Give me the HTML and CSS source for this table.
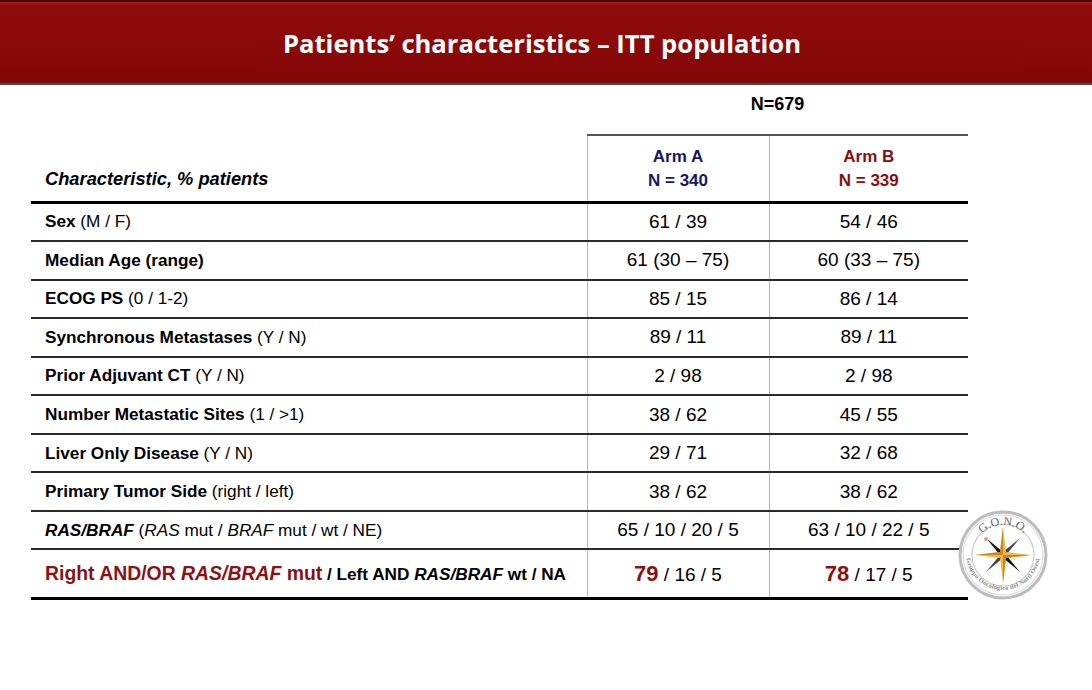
FILE: index.html
```html
<!DOCTYPE html>
<html>
<head>
<meta charset="utf-8">
<link rel="stylesheet" href="styles.css">
</head>
<body>
<header class="banner"><h1>Patients’ characteristics – ITT population</h1></header>
<main class="content">
<table class="chars">
  <colgroup><col class="c1"><col class="c2"><col class="c3"></colgroup>
  <tr class="total">
    <td></td><td colspan="2" class="ntot">N=679</td>
  </tr>
  <tr class="head">
    <th class="label">Characteristic, % patients</th>
    <th class="arm arm-a">Arm A<br>N = 340</th>
    <th class="arm arm-b">Arm B<br>N = 339</th>
  </tr>
  <tr><td class="label"><b>Sex</b> (M / F)</td><td>61 / 39</td><td>54 / 46</td></tr>
  <tr><td class="label"><b>Median Age (range)</b></td><td>61 (30 – 75)</td><td>60 (33 – 75)</td></tr>
  <tr><td class="label"><b>ECOG PS</b> (0 / 1-2)</td><td>85 / 15</td><td>86 / 14</td></tr>
  <tr><td class="label"><b>Synchronous Metastases</b> (Y / N)</td><td>89 / 11</td><td>89 / 11</td></tr>
  <tr><td class="label"><b>Prior Adjuvant CT</b> (Y / N)</td><td>2 / 98</td><td>2 / 98</td></tr>
  <tr><td class="label"><b>Number Metastatic Sites</b> (1 / &gt;1)</td><td>38 / 62</td><td>45 / 55</td></tr>
  <tr><td class="label"><b>Liver Only Disease</b> (Y / N)</td><td>29 / 71</td><td>32 / 68</td></tr>
  <tr><td class="label"><b>Primary Tumor Side</b> (right / left)</td><td>38 / 62</td><td>38 / 62</td></tr>
  <tr><td class="label"><b><i>RAS/BRAF</i></b> (<i>RAS</i> mut / <i>BRAF</i> mut / wt / NE)</td><td>65 / 10 / 20 / 5</td><td>63 / 10 / 22 / 5</td></tr>
  <tr class="last">
    <td class="label"><span class="hl">Right AND/OR <i>RAS/BRAF</i> mut</span> <b class="rest">/ Left AND <i>RAS/BRAF</i> wt / NA</b></td>
    <td><span class="big">79</span> / 16 / 5</td>
    <td><span class="big">78</span> / 17 / 5</td>
  </tr>
</table>
<div class="logo">
  <svg width="92" height="92" viewBox="0 0 92 92">
    <defs>
      <path id="arcTop" d="M16 46 A30 30 0 0 1 76 46"/>
      <path id="arcBot" d="M9 44 A37 37 0 0 0 83 44"/>
    </defs>
    <circle cx="46" cy="46" r="43" fill="#fff" stroke="#bdbdbd" stroke-width="3"/>
    <circle cx="46" cy="46" r="40" fill="none" stroke="#e2e2e2" stroke-width="1.5"/>
    <circle cx="46" cy="46" r="31" fill="none" stroke="#cacaca" stroke-width="1.2"/>
    <text font-family="Liberation Serif, serif" font-size="12" fill="#666"><textPath href="#arcTop" startOffset="50%" text-anchor="middle">G.O.N.O.</textPath></text>
    <text font-family="Liberation Serif, serif" font-size="6.5" font-weight="700" fill="#8a8a8a" letter-spacing="0.2"><textPath href="#arcBot" startOffset="50%" text-anchor="middle">Gruppo Oncologico del Nord Ovest</textPath></text>
    <polygon points="29,29 46,43 43,46" fill="#111"/>
    <polygon points="63,29 46,43 49,46" fill="#444"/>
    <polygon points="29,63 46,49 43,46" fill="#444"/>
    <polygon points="63,63 46,49 49,46" fill="#111"/>
    <polygon points="46,18 49,43 46,46 43,43" fill="#f3b44a"/>
    <polygon points="46,74 49,49 46,46 43,49" fill="#f3b44a"/>
    <polygon points="18,46 43,43 46,46 43,49" fill="#f3b44a"/>
    <polygon points="74,46 49,43 46,46 49,49" fill="#f3b44a"/>
    <polygon points="46,18 46,46 43,43" fill="#c98722"/>
    <polygon points="46,74 46,46 49,49" fill="#c98722"/>
    <polygon points="74,46 46,46 49,49" fill="#c98722"/>
    <polygon points="18,46 46,46 43,43" fill="#c98722"/>
    <circle cx="29" cy="30" r="2" fill="#e8a050"/>
  </svg>
</div>
</main>
</body>
</html>
```
FILE: styles.css
```css
html, body {
  margin: 0;
  padding: 0;
  background: #fff;
}
body {
  width: 1092px;
  height: 690px;
  overflow: hidden;
  font-family: "Liberation Sans", Arial, sans-serif;
  color: #000;
}
.banner {
  height: 81px;
  background: linear-gradient(#a81a1a 0, #8e0b0b 4px, #8a0909 60%, #800707 100%);
  border-top: 2px solid #4a0404;
  border-bottom: 2px solid #4a4a4a;
  display: flex;
  align-items: center;
  justify-content: center;
}
.banner h1 {
  margin: 0;
  color: #fff;
  font-family: "Open Sans", "Noto Sans", sans-serif;
  font-weight: 700;
  font-size: 25.6px;
  letter-spacing: 0;
  padding-top: 2px;
  padding-right: 8px;
}
.content {
  position: relative;
  padding-left: 31px;
}
.chars {
  border-collapse: collapse;
  width: 937px;
  table-layout: fixed;
  font-size: 19px;
}
.c1 { width: 556px; }
.c2 { width: 182px; }
.c3 { width: 199px; }
.chars td, .chars th {
  padding: 0;
  text-align: center;
  border-bottom: 2px solid #2a2a2a;
  height: 36.55px;
  vertical-align: middle;
}
.chars td + td, .chars th + th {
  border-left: 1px solid #b8b8b8;
}
.chars .label {
  text-align: left;
  padding-left: 14px;
  font-size: 17.2px;
}
.total td {
  height: 40px;
  border-bottom: none;
  border-left: none !important;
}
.total .ntot {
  border-bottom: 2px solid #555;
  font-weight: 700;
  font-size: 18px;
  vertical-align: top;
  padding-top: 9px;
  height: 40px;
}
.head th {
  height: 54.5px;
  border-bottom: 3px solid #000;
  font-weight: 700;
}
.head .label {
  font-style: italic;
  vertical-align: bottom;
  padding-bottom: 11px;
  font-size: 18.3px;
}
.head .arm {
  font-size: 17px;
  line-height: 24px;
  padding-top: 1px;
}
.arm-a { color: #16166a; }
.arm-b { color: #8b0d0d; }
.last td {
  height: 47px;
  border-bottom: 3px solid #000;
}
.hl {
  color: #8b1212;
  font-weight: 700;
  font-size: 19.4px;
}
.rest {
  font-size: 17.2px;
}
.big {
  color: #8b1212;
  font-weight: 700;
  font-size: 22px;
}
.logo {
  position: absolute;
  left: 957px;
  top: 424px;
}
```
